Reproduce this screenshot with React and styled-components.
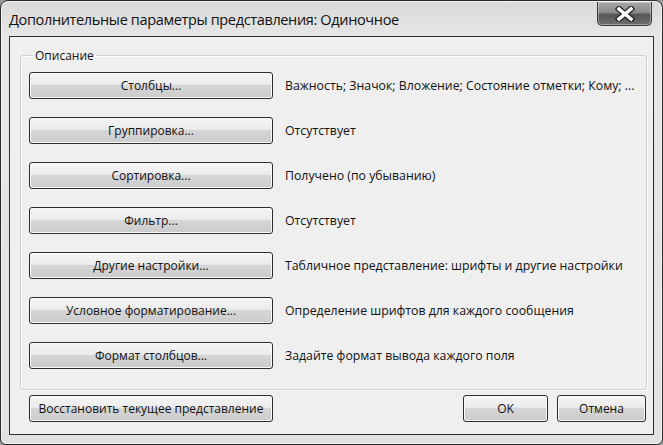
import styled, { createGlobalStyle } from "styled-components";

const Global = createGlobalStyle`
  html, body {
    margin: 0;
    padding: 0;
    background: #9a9a9a;
  }
  body {
    font-family: "Open Sans", "Noto Sans", "DejaVu Sans", sans-serif;
    color: #111;
  }
`;

const Window = styled.div`
  box-sizing: border-box;
  width: 663px;
  height: 445px;
  display: flex;
  flex-direction: column;
  border: 1px solid #2a2a2a;
  border-radius: 8px 8px 6px 6px;
  background: linear-gradient(180deg, #d9d9d9 0%, #e6e6e6 8%, #e2e2e2 100%);
  box-shadow: inset 0 0 0 1px #f4f4f4;
  padding: 0 8px 9px 8px;
`;

const TitleBar = styled.div`
  height: 35px;
  display: flex;
  align-items: flex-start;
  justify-content: space-between;
`;

const Title = styled.div`
  margin-top: 9px;
  font-size: 14.5px;
  letter-spacing: -0.35px;
  color: #111;
`;

const CloseButton = styled.div`
  width: 55px;
  height: 24px;
  margin-top: 1px;
  margin-right: 2px;
  box-sizing: border-box;
  border: 1px solid #3a3a3a;
  border-top: none;
  border-radius: 0 0 5px 5px;
  background: linear-gradient(180deg, #a8a8a8 0%, #8a8a8a 45%, #555 55%, #707070 100%);
  box-shadow: inset 0 0 0 1px rgba(255, 255, 255, 0.35);
  display: flex;
  align-items: center;
  justify-content: center;
`;

const Client = styled.div`
  flex: 1;
  box-sizing: border-box;
  border: 1px solid #2e2e2e;
  background: #efefef;
  padding: 10px 6px 0 10px;
  display: flex;
  flex-direction: column;
`;

const Group = styled.fieldset`
  margin: 0;
  padding: 8px 0 20px 8px;
  border: 1px solid #cfcfcf;
  border-radius: 3px;
  box-shadow: inset 1px 1px 0 #fbfbfb, 1px 1px 0 #fbfbfb;
  display: flex;
  flex-direction: column;
  gap: 18px;
`;

const Legend = styled.legend`
  margin-left: 4px;
  padding: 0 2px;
  font-size: 12px;
  color: #111;
`;

const Row = styled.div`
  display: flex;
  align-items: center;
  gap: 12px;
`;

const Button = styled.button`
  box-sizing: border-box;
  width: ${({ $w }) => $w || 244}px;
  height: 27px;
  padding: 0;
  border: 1px solid #2c2c2c;
  border-radius: 3px;
  background: linear-gradient(
    180deg,
    #f4f4f4 0%,
    #ececec 45%,
    #d6d6d6 50%,
    #cbcbcb 100%
  );
  box-shadow: inset 0 0 0 1px #fafafa;
  font-family: "Open Sans", "Noto Sans", sans-serif;
  font-size: 12px;
  color: #111;
  text-align: center;
  cursor: default;
`;

const Desc = styled.span`
  font-size: 12.3px;
  color: #111;
  white-space: nowrap;
`;

const Footer = styled.div`
  display: flex;
  align-items: center;
  padding: 5px 1px 0 9px;
`;

const Spacer = styled.div`
  flex: 1;
`;

const FooterGap = styled.div`
  width: 9px;
`;

const rows = [
  ["Столбцы...", "Важность; Значок; Вложение; Состояние отметки; Кому; ..."],
  ["Группировка...", "Отсутствует"],
  ["Сортировка...", "Получено (по убыванию)"],
  ["Фильтр...", "Отсутствует"],
  ["Другие настройки...", "Табличное представление: шрифты и другие настройки"],
  ["Условное форматирование...", "Определение шрифтов для каждого сообщения"],
  ["Формат столбцов...", "Задайте формат вывода каждого поля"],
];

function CloseIcon() {
  return (
    <svg width="20" height="16" viewBox="0 0 20 16">
      <path
        d="M4 3 L16 13 M16 3 L4 13"
        stroke="#222"
        strokeWidth="6"
        strokeLinecap="square"
      />
      <path
        d="M4 3 L16 13 M16 3 L4 13"
        stroke="#fff"
        strokeWidth="3.5"
        strokeLinecap="square"
      />
    </svg>
  );
}

export default function App() {
  return (
    <>
      <Global />
      <Window>
        <TitleBar>
          <Title>Дополнительные параметры представления: Одиночное</Title>
          <CloseButton>
            <CloseIcon />
          </CloseButton>
        </TitleBar>
        <Client>
          <Group>
            <Legend>Описание</Legend>
            {rows.map(([label, text]) => (
              <Row key={label}>
                <Button>{label}</Button>
                <Desc>{text}</Desc>
              </Row>
            ))}
          </Group>
          <Footer>
            <Button>Восстановить текущее представление</Button>
            <Spacer />
            <Button $w={85}>OK</Button>
            <FooterGap />
            <Button $w={89}>Отмена</Button>
          </Footer>
        </Client>
      </Window>
    </>
  );
}
